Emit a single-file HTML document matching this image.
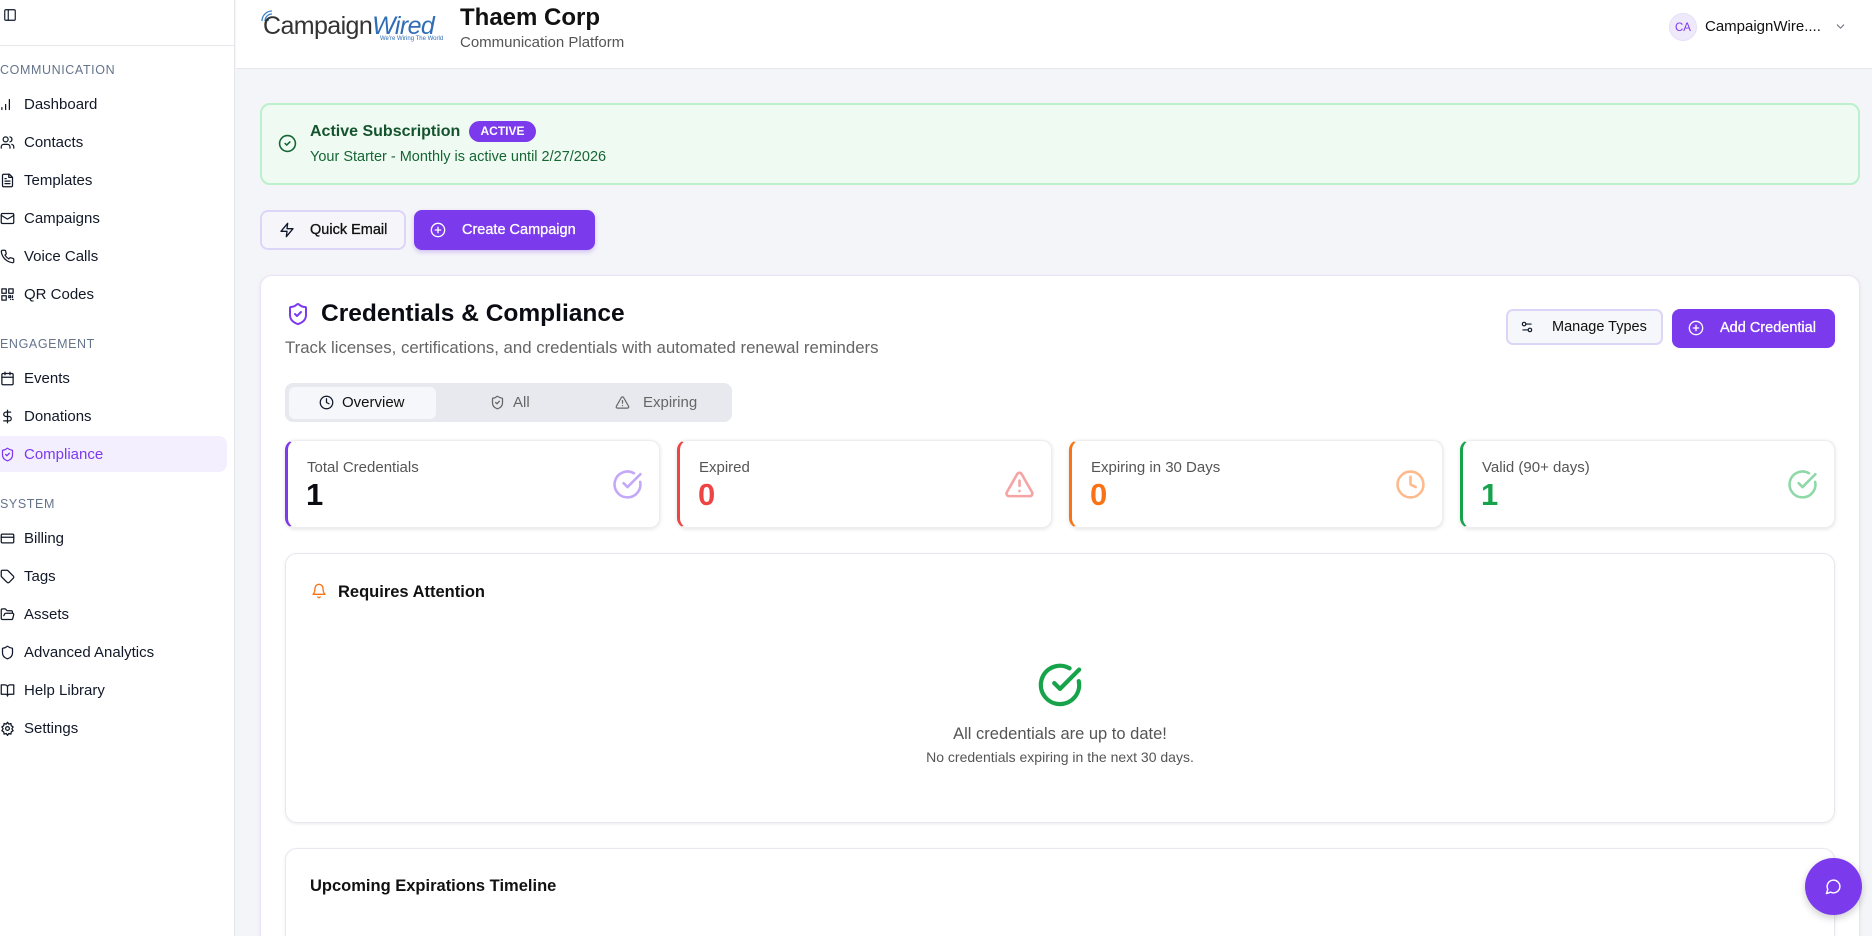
<!DOCTYPE html>
<html style="overflow:hidden;width:1872px;height:936px"><head><meta charset="utf-8"><style>
*{box-sizing:border-box;margin:0;padding:0}
body{width:1872px;height:936px;overflow:hidden;background:#f4f5f8;font-family:"Liberation Sans",sans-serif;color:#0f172a;position:relative}
.a{position:absolute}
svg.i{fill:none;stroke:currentColor;stroke-width:2;stroke-linecap:round;stroke-linejoin:round}
.side{left:0;top:0;width:235px;height:936px;background:#fff;border-right:1px solid #e5e7eb}
.sec{font-size:12.5px;color:#64748b;letter-spacing:.6px;left:0}
.it{left:0;font-size:15px;color:#111827;display:flex;align-items:center;gap:9px;height:20px}
.it svg{width:15px;height:15px}
.card{background:#fff;border:1px solid #e8e8ef;border-radius:12px;box-shadow:0 1px 3px rgba(0,0,0,.08)}
.stat{background:#fff;border-radius:10px;box-shadow:0 1px 4px rgba(0,0,0,.12);border:1px solid #eee}
.stat .l{position:absolute;left:19px;top:18px;font-size:15px;color:#555}
.stat .n{position:absolute;left:18px;top:36px;font-size:31px;font-weight:bold}
.stat svg{position:absolute;right:16px;top:28px;width:31px;height:31px}
</style></head><body>
<div class="a side">
 <svg class="a i" style="left:3px;top:8px;width:14px;height:14px" viewBox="0 0 24 24"><rect x="3" y="3" width="18" height="18" rx="2"/><path d="M9 3v18"/></svg>
 <div class="a" style="left:0;top:45px;width:235px;border-top:1px solid #e5e7eb"></div>
 <div class="a sec" style="top:63px">COMMUNICATION</div>
 <div class="a it" style="top:94px"><svg class="i" viewBox="0 0 24 24"><path d="M3 20v-3M9 20v-8M15 20V4"/></svg>Dashboard</div>
 <div class="a it" style="top:132px"><svg class="i" viewBox="0 0 24 24"><circle cx="9" cy="7" r="4"/><path d="M2 21v-2a4 4 0 0 1 4-4h6a4 4 0 0 1 4 4v2M16 3.1a4 4 0 0 1 0 7.8M22 21v-2a4 4 0 0 0-3-3.9"/></svg>Contacts</div>
 <div class="a it" style="top:170px"><svg class="i" viewBox="0 0 24 24"><path d="M15 2H6a2 2 0 0 0-2 2v16a2 2 0 0 0 2 2h12a2 2 0 0 0 2-2V7z"/><path d="M14 2v5h5M16 13H8M16 17H8M10 9H8"/></svg>Templates</div>
 <div class="a it" style="top:208px"><svg class="i" viewBox="0 0 24 24"><rect x="2" y="4" width="20" height="16" rx="2"/><path d="m22 7-10 6L2 7"/></svg>Campaigns</div>
 <div class="a it" style="top:246px"><svg class="i" viewBox="0 0 24 24"><path d="M22 16.9v3a2 2 0 0 1-2.2 2 19.8 19.8 0 0 1-8.6-3.1 19.5 19.5 0 0 1-6-6A19.8 19.8 0 0 1 2.1 4.2 2 2 0 0 1 4.1 2h3a2 2 0 0 1 2 1.7c.1 1 .4 1.9.7 2.8a2 2 0 0 1-.5 2.1L8 9.8a16 16 0 0 0 6 6l1.3-1.3a2 2 0 0 1 2.1-.4c.9.3 1.8.6 2.8.7a2 2 0 0 1 1.7 2z"/></svg>Voice Calls</div>
 <div class="a it" style="top:284px"><svg class="i" viewBox="0 0 24 24"><rect x="3" y="3" width="7" height="7"/><rect x="14" y="3" width="7" height="7"/><rect x="3" y="14" width="7" height="7"/><path d="M14 14h3v3h-3zM20 20h1M17 20h0M20 14v3"/></svg>QR Codes</div>
 <div class="a sec" style="top:337px">ENGAGEMENT</div>
 <div class="a it" style="top:368px"><svg class="i" viewBox="0 0 24 24"><rect x="3" y="4" width="18" height="18" rx="2"/><path d="M16 2v4M8 2v4M3 10h18"/></svg>Events</div>
 <div class="a it" style="top:406px"><svg class="i" viewBox="0 0 24 24"><path d="M12 2v20M17 5H9.5a3.5 3.5 0 0 0 0 7h5a3.5 3.5 0 0 1 0 7H6"/></svg>Donations</div>
 <div class="a" style="left:0;top:436px;width:227px;height:36px;background:#f3effe;border-radius:0 8px 8px 0"></div>
 <div class="a it" style="top:444px;color:#7c3aed"><svg class="i" viewBox="0 0 24 24"><path d="M20 13c0 5-3.5 7.5-7.7 9a1 1 0 0 1-.7 0C7.5 20.5 4 18 4 13V6a1 1 0 0 1 1-1c2 0 4.5-1.2 6.2-2.7a1.2 1.2 0 0 1 1.5 0C14.5 3.8 17 5 19 5a1 1 0 0 1 1 1z"/><path d="m9 12 2 2 4-4"/></svg>Compliance</div>
 <div class="a sec" style="top:497px">SYSTEM</div>
 <div class="a it" style="top:528px"><svg class="i" viewBox="0 0 24 24"><rect x="2" y="5" width="20" height="14" rx="2"/><path d="M2 10h20"/></svg>Billing</div>
 <div class="a it" style="top:566px"><svg class="i" viewBox="0 0 24 24"><path d="M12.6 2.6A2 2 0 0 0 11.2 2H4a2 2 0 0 0-2 2v7.2a2 2 0 0 0 .6 1.4l8.7 8.7a2.4 2.4 0 0 0 3.4 0l6.6-6.6a2.4 2.4 0 0 0 0-3.4z"/></svg>Tags</div>
 <div class="a it" style="top:604px"><svg class="i" viewBox="0 0 24 24"><path d="m6 14 1.5-2.9A2 2 0 0 1 9.2 10H20a2 2 0 0 1 1.9 2.5l-1.5 6a2 2 0 0 1-2 1.5H4a2 2 0 0 1-2-2V5a2 2 0 0 1 2-2h3.9a2 2 0 0 1 1.7.9l.8 1.2a2 2 0 0 0 1.7.9H18a2 2 0 0 1 2 2v2"/></svg>Assets</div>
 <div class="a it" style="top:642px"><svg class="i" viewBox="0 0 24 24"><path d="M20 13c0 5-3.5 7.5-7.7 9a1 1 0 0 1-.7 0C7.5 20.5 4 18 4 13V6a1 1 0 0 1 1-1c2 0 4.5-1.2 6.2-2.7a1.2 1.2 0 0 1 1.5 0C14.5 3.8 17 5 19 5a1 1 0 0 1 1 1z"/></svg>Advanced Analytics</div>
 <div class="a it" style="top:680px"><svg class="i" viewBox="0 0 24 24"><path d="M2 3h6a4 4 0 0 1 4 4v14a3 3 0 0 0-3-3H2zM22 3h-6a4 4 0 0 0-4 4v14a3 3 0 0 1 3-3h7z"/></svg>Help Library</div>
 <div class="a it" style="top:718px"><svg class="i" viewBox="0 0 24 24"><circle cx="12" cy="12" r="3"/><path d="M12 2l2 3 3.5-1 .5 3.5 3 2-2 3 2 3-3 2-.5 3.5-3.5-1-2 3-2-3-3.5 1L6 17.5l-3-2 2-3-2-3 3-2 .5-3.5 3.5 1z"/></svg>Settings</div>
</div>

<div class="a" style="left:236px;top:0;width:1636px;height:69px;background:#fff;border-bottom:1px solid #e5e7eb"></div>
<svg class="a" style="left:260px;top:9px" width="20" height="14" viewBox="0 0 20 14"><path d="M2 12a10 10 0 0 1 10-10M5 12a7 7 0 0 1 7-7M8 12a4 4 0 0 1 4-4" stroke="#3b82c4" stroke-width="1.3" fill="none"/></svg>
<div class="a" style="left:263px;top:12px;font-size:25px;letter-spacing:-0.6px"><span style="color:#333">Campaign</span><span style="color:#2f6db5;font-style:italic">Wired</span></div>
<div class="a" style="left:380px;top:36px;font-size:6px;color:#2f6db5">We're Wiring The World</div>
<div class="a" style="left:460px;top:4px;font-size:24px;font-weight:bold;color:#111">Thaem Corp</div>
<div class="a" style="left:460px;top:34px;font-size:15px;color:#555">Communication Platform</div>
<div class="a" style="left:1669px;top:13px;width:28px;height:28px;border-radius:50%;background:#efe9fc;color:#7c3aed;font-size:11.5px;text-align:center;line-height:28px;border:1px solid #e6e0f5">CA</div>
<div class="a" style="left:1705px;top:18px;font-size:15px;color:#111">CampaignWire....</div>
<svg class="a i" style="left:1834px;top:20px;width:13px;height:13px;color:#6b7280" viewBox="0 0 24 24"><path d="m6 9 6 6 6-6"/></svg>

<div class="a" style="left:260px;top:103px;width:1600px;height:82px;background:#effbf2;border:2px solid #bbf0cc;border-radius:10px"></div>
<svg class="a i" style="left:278px;top:134px;width:19px;height:19px;color:#166534" viewBox="0 0 24 24"><circle cx="12" cy="12" r="10"/><path d="m9 12 2 2 4-4"/></svg>
<div class="a" style="left:310px;top:123px;font-size:16px;font-weight:bold;color:#14532d">Active Subscription</div>
<div class="a" style="left:469px;top:121px;width:67px;height:21px;border-radius:11px;background:#7c3aed;color:#fff;font-size:12px;font-weight:bold;text-align:center;line-height:21px">ACTIVE</div>
<div class="a" style="left:310px;top:149px;font-size:14.5px;color:#166534">Your Starter - Monthly is active until 2/27/2026</div>

<div class="a" style="left:260px;top:210px;width:146px;height:40px;background:#f6f6fa;border:2px solid #ddd5f8;border-radius:8px"></div>
<svg class="a i" style="left:279px;top:222px;width:16px;height:16px" viewBox="0 0 24 24"><path d="M13 2 3 14h9l-1 8 10-12h-9z"/></svg>
<div class="a" style="left:310px;top:222px;font-size:14.5px;color:#111;-webkit-text-stroke:0.3px #111">Quick Email</div>
<div class="a" style="left:414px;top:210px;width:181px;height:40px;background:#7c3aed;border-radius:8px;box-shadow:0 2px 5px rgba(124,58,237,.3)"></div>
<svg class="a i" style="left:430px;top:222px;width:16px;height:16px;color:#fff" viewBox="0 0 24 24"><circle cx="12" cy="12" r="10"/><path d="M8 12h8M12 8v8"/></svg>
<div class="a" style="left:462px;top:222px;font-size:14.5px;color:#fff;-webkit-text-stroke:0.3px #fff">Create Campaign</div>

<div class="a card" style="left:260px;top:275px;width:1600px;height:680px;border-color:#e9e4f7"></div>
<svg class="a i" style="left:286px;top:302px;width:24px;height:24px;color:#7c3aed" viewBox="0 0 24 24"><path d="M20 13c0 5-3.5 7.5-7.7 9a1 1 0 0 1-.7 0C7.5 20.5 4 18 4 13V6a1 1 0 0 1 1-1c2 0 4.5-1.2 6.2-2.7a1.2 1.2 0 0 1 1.5 0C14.5 3.8 17 5 19 5a1 1 0 0 1 1 1z"/><path d="m9 12 2 2 4-4"/></svg>
<div class="a" style="left:321px;top:300px;font-size:24.5px;font-weight:bold;color:#0b0b14">Credentials &amp; Compliance</div>
<div class="a" style="left:285px;top:338px;font-size:16.8px;color:#666">Track licenses, certifications, and credentials with automated renewal reminders</div>

<div class="a" style="left:1506px;top:309px;width:157px;height:36px;background:#f6f7fa;border:2px solid #ddd5f8;border-radius:7px"></div>
<svg class="a i" style="left:1520px;top:320px;width:14px;height:14px" viewBox="0 0 24 24"><path d="M14 17H5M19 7h-9"/><circle cx="17" cy="17" r="3"/><circle cx="7" cy="7" r="3"/></svg>
<div class="a" style="left:1552px;top:319px;font-size:14.5px;color:#111">Manage Types</div>
<div class="a" style="left:1672px;top:309px;width:163px;height:39px;background:#7c3aed;border-radius:8px"></div>
<svg class="a i" style="left:1688px;top:320px;width:16px;height:16px;color:#fff" viewBox="0 0 24 24"><circle cx="12" cy="12" r="10"/><path d="M8 12h8M12 8v8"/></svg>
<div class="a" style="left:1720px;top:320px;font-size:14.5px;color:#fff;-webkit-text-stroke:0.3px #fff">Add Credential</div>

<div class="a" style="left:285px;top:383px;width:447px;height:39px;background:#e8e9ee;border-radius:8px"></div>
<div class="a" style="left:289px;top:387px;width:147px;height:32px;background:#f6f7fa;border-radius:6px"></div>
<svg class="a i" style="left:319px;top:395px;width:15px;height:15px" viewBox="0 0 24 24"><circle cx="12" cy="12" r="10"/><path d="M12 6v6l4 2"/></svg>
<div class="a" style="left:342px;top:394px;font-size:15px;color:#111">Overview</div>
<svg class="a i" style="left:490px;top:395px;width:15px;height:15px;color:#666" viewBox="0 0 24 24"><path d="M20 13c0 5-3.5 7.5-7.7 9a1 1 0 0 1-.7 0C7.5 20.5 4 18 4 13V6a1 1 0 0 1 1-1c2 0 4.5-1.2 6.2-2.7a1.2 1.2 0 0 1 1.5 0C14.5 3.8 17 5 19 5a1 1 0 0 1 1 1z"/><path d="m9 12 2 2 4-4"/></svg>
<div class="a" style="left:513px;top:394px;font-size:15px;color:#666">All</div>
<svg class="a i" style="left:615px;top:395px;width:15px;height:15px;color:#666" viewBox="0 0 24 24"><path d="m21.7 18-8-14a2 2 0 0 0-3.5 0l-8 14A2 2 0 0 0 4 21h16a2 2 0 0 0 1.7-3zM12 9v4M12 17h0"/></svg>
<div class="a" style="left:643px;top:394px;font-size:15px;color:#666">Expiring</div>

<div class="a stat" style="left:285px;top:440px;width:375px;height:88px;border-left:3px solid #7c3aed"><div class="l">Total Credentials</div><div class="n" style="color:#0b0b14">1</div><svg class="i" style="color:#c4a8f8" viewBox="0 0 24 24"><path d="M21.8 10A10 10 0 1 1 17 3.3"/><path d="m9 11 3 3L22 4"/></svg></div>
<div class="a stat" style="left:677px;top:440px;width:375px;height:88px;border-left:3px solid #ef4444"><div class="l">Expired</div><div class="n" style="color:#ef4444">0</div><svg class="i" style="color:#f6a3a3" viewBox="0 0 24 24"><path d="m21.7 18-8-14a2 2 0 0 0-3.5 0l-8 14A2 2 0 0 0 4 21h16a2 2 0 0 0 1.7-3zM12 9v4M12 17h0"/></svg></div>
<div class="a stat" style="left:1069px;top:440px;width:374px;height:88px;border-left:3px solid #f97316"><div class="l">Expiring in 30 Days</div><div class="n" style="color:#f97316">0</div><svg class="i" style="color:#fdba8c" viewBox="0 0 24 24"><circle cx="12" cy="12" r="10"/><path d="M12 6v6l4 2"/></svg></div>
<div class="a stat" style="left:1460px;top:440px;width:375px;height:88px;border-left:3px solid #16a34a"><div class="l">Valid (90+ days)</div><div class="n" style="color:#16a34a">1</div><svg class="i" style="color:#8fd9a8" viewBox="0 0 24 24"><path d="M21.8 10A10 10 0 1 1 17 3.3"/><path d="m9 11 3 3L22 4"/></svg></div>

<div class="a card" style="left:285px;top:553px;width:1550px;height:270px"></div>
<svg class="a i" style="left:311px;top:583px;width:16px;height:16px;color:#f97316" viewBox="0 0 24 24"><path d="M6 8a6 6 0 0 1 12 0c0 7 3 9 3 9H3s3-2 3-9M10.3 21a1.9 1.9 0 0 0 3.4 0"/></svg>
<div class="a" style="left:338px;top:583px;font-size:16.5px;font-weight:bold;color:#111">Requires Attention</div>
<svg class="a i" style="left:1037px;top:662px;width:46px;height:46px;color:#16a34a;stroke-width:2.2" viewBox="0 0 24 24"><path d="M21.8 10A10 10 0 1 1 17 3.3"/><path d="m9 11 3 3L22 4"/></svg>
<div class="a" style="left:0;width:2120px;top:725px;font-size:16.5px;color:#555;text-align:center">All credentials are up to date!</div>
<div class="a" style="left:0;width:2120px;top:749px;font-size:14px;color:#555;text-align:center">No credentials expiring in the next 30 days.</div>

<div class="a card" style="left:285px;top:848px;width:1550px;height:110px"></div>
<div class="a" style="left:310px;top:877px;font-size:16.5px;font-weight:bold;color:#111">Upcoming Expirations Timeline</div>

<div class="a" style="left:1805px;top:858px;width:57px;height:57px;border-radius:50%;background:#7c3aed;box-shadow:0 3px 8px rgba(0,0,0,.2)"></div>
<svg class="a i" style="left:1825px;top:878px;width:17px;height:17px;color:#fff" viewBox="0 0 24 24"><path d="M7.9 20A9 9 0 1 0 4 16.1L2 22z"/></svg>
</body></html>
